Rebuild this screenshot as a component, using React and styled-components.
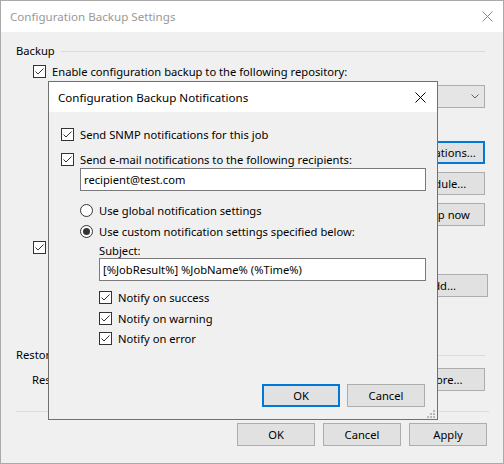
import React from 'react';
import styled, { createGlobalStyle } from 'styled-components';

const GlobalStyle = createGlobalStyle`
  html, body {
    margin: 0;
    padding: 0;
    background: #ffffff;
  }
  body {
    font-family: "Noto Sans", "Open Sans", sans-serif;
    font-size: 11.2px;
    color: #000;
  }
  * { box-sizing: border-box; }
`;

const CheckIcon = ({ checked = true }) => (
  <svg width="13" height="13" viewBox="0 0 13 13">
    <rect x="0.5" y="0.5" width="12" height="12" fill="#fff" stroke="#333" />
    {checked && (
      <polyline points="2.5,6.5 5,9 10.5,3.5" fill="none" stroke="#333" strokeWidth="1" />
    )}
  </svg>
);

const RadioIcon = ({ checked }) => (
  <svg width="13" height="13" viewBox="0 0 13 13">
    <circle cx="6.5" cy="6.5" r="6" fill="#fff" stroke="#333" />
    {checked && <circle cx="6.5" cy="6.5" r="3.5" fill="#333" />}
  </svg>
);

const CloseIcon = ({ color }) => (
  <svg width="11" height="11" viewBox="0 0 11 11">
    <path d="M0.5 0.5 L10.5 10.5 M10.5 0.5 L0.5 10.5" stroke={color} strokeWidth="1" />
  </svg>
);

const Chevron = () => (
  <svg width="8" height="5" viewBox="0 0 8 5">
    <polyline points="0.5,0.5 4,4 7.5,0.5" fill="none" stroke="#606060" />
  </svg>
);

const Grip = () => (
  <svg width="8" height="8" viewBox="0 0 8 8">
    <rect x="6" y="0" width="2" height="2" fill="#b8b8b8" />
    <rect x="3" y="3" width="2" height="2" fill="#b8b8b8" />
    <rect x="6" y="3" width="2" height="2" fill="#b8b8b8" />
    <rect x="0" y="6" width="2" height="2" fill="#b8b8b8" />
    <rect x="3" y="6" width="2" height="2" fill="#b8b8b8" />
    <rect x="6" y="6" width="2" height="2" fill="#b8b8b8" />
  </svg>
);

const Window = styled.div`
  position: relative;
  width: 504px;
  height: 464px;
  border: 1px solid #aaaaaa;
  background: #f0f0f0;
  display: flex;
  flex-direction: column;
`;

const TitleBar = styled.div`
  height: ${p => p.$height}px;
  flex-shrink: 0;
  background: #ffffff;
  display: flex;
  align-items: center;
  justify-content: space-between;
  padding: 0 ${p => p.$padRight}px 0 ${p => p.$padLeft}px;
  color: ${p => (p.$active ? '#000' : '#999')};
  font-size: 11.6px;
`;

const CloseBox = styled.div`
  display: flex;
  align-items: center;
`;

const Body = styled.div`
  flex: 1;
  display: flex;
  flex-direction: column;
  padding: 12px 18px 0 15px;
`;

const GroupHeader = styled.div`
  height: 14px;
  display: flex;
  align-items: center;
  gap: 6px;
  margin-top: ${p => p.$top || 0}px;
  line-height: 14px;

  &::after {
    content: '';
    flex: 1;
    height: 1px;
    background: #dcdcdc;
  }
`;

const OptionRow = styled.label`
  height: 15px;
  display: flex;
  align-items: center;
  gap: 6px;
  line-height: 15px;
  white-space: nowrap;
  margin-top: ${p => p.$top || 0}px;
  margin-left: ${p => p.$indent || 0}px;

  svg { flex-shrink: 0; }
`;

const Combo = styled.div`
  height: 23px;
  margin-top: ${p => p.$top}px;
  margin-left: 36px;
  border: 1px solid #adadad;
  background: #e5e5e5;
  display: flex;
  align-items: center;
  justify-content: flex-end;
  padding-right: 5px;
`;

const Button = styled.div`
  width: ${p => p.$width || 94}px;
  height: 23px;
  flex-shrink: 0;
  background: #e1e1e1;
  border: ${p => (p.$focused ? '2px solid #0078d7' : '1px solid #adadad')};
  display: flex;
  align-items: center;
  justify-content: center;
  white-space: nowrap;
  overflow: hidden;
  line-height: 15px;
`;

const ButtonStack = styled.div`
  align-self: flex-end;
  display: flex;
  flex-direction: column;
  gap: 8px;
  margin-top: ${p => p.$top}px;
  margin-right: ${p => p.$right || 0}px;
`;

const Row = styled.div`
  display: flex;
  align-items: center;
  justify-content: space-between;
  margin-top: ${p => p.$top}px;
  margin-left: ${p => p.$indent || 0}px;
`;

const Separator = styled.div`
  height: 1px;
  background: #dcdcdc;
  margin: 20px -4px 0 0;
`;

const Footer = styled.div`
  display: flex;
  justify-content: flex-end;
  gap: 8px;
  margin: 11px -2px 0 0;
`;

const Dialog = styled.div`
  position: absolute;
  left: 47px;
  top: 80px;
  width: 390px;
  height: 339px;
  border: 1px solid #707070;
  background: #f0f0f0;
  display: flex;
  flex-direction: column;
`;

const DialogBody = styled.div`
  position: relative;
  flex: 1;
  display: flex;
  flex-direction: column;
  padding: 15px 12px 12px 12px;
`;

const Field = styled.div`
  height: 23px;
  width: ${p => p.$width}px;
  margin-top: ${p => p.$top || 0}px;
  margin-left: ${p => p.$indent}px;
  background: #ffffff;
  border: 1px solid #7a7a7a;
  display: flex;
  align-items: center;
  padding-left: 3px;
  white-space: nowrap;
`;

const FieldLabel = styled.div`
  height: 13px;
  line-height: 13px;
  margin-top: ${p => p.$top}px;
  margin-left: ${p => p.$indent}px;
`;

const DialogButtons = styled.div`
  margin-top: auto;
  display: flex;
  justify-content: flex-end;
  gap: 7px;
`;

const GripCorner = styled.div`
  position: absolute;
  right: 2px;
  bottom: 1px;
  display: flex;
`;

export default function App() {
  return (
    <>
      <GlobalStyle />
      <Window>
        <TitleBar $height={31} $padLeft={9} $padRight={10}>
          <span>Configuration Backup Settings</span>
          <CloseBox><CloseIcon color="#8a8a8a" /></CloseBox>
        </TitleBar>
        <Body>
          <GroupHeader>Backup</GroupHeader>
          <OptionRow $top={6} $indent={17}>
            <CheckIcon />
            Enable configuration backup to the following repository:
          </OptionRow>
          <Combo $top={6}><Chevron /></Combo>
          <ButtonStack $top={33}>
            <Button $focused>Notifications...</Button>
            <Button>Schedule...</Button>
            <Button>Backup now</Button>
          </ButtonStack>
          <OptionRow $top={14} $indent={17}>
            <CheckIcon />
            Encrypt configuration backup
          </OptionRow>
          <ButtonStack $top={19} $right={-3}>
            <Button>Add...</Button>
          </ButtonStack>
          <GroupHeader $top={51}>Restore</GroupHeader>
          <Row $top={6} $indent={16}>
            <span>Restore configuration from backup</span>
            <Button>Restore...</Button>
          </Row>
          <Separator />
          <Footer>
            <Button $width={78}>OK</Button>
            <Button $width={78}>Cancel</Button>
            <Button $width={78}>Apply</Button>
          </Footer>
        </Body>

        <Dialog>
          <TitleBar $active $height={30} $padLeft={9} $padRight={11}>
            <span>Configuration Backup Notifications</span>
            <CloseBox><CloseIcon color="#000" /></CloseBox>
          </TitleBar>
          <DialogBody>
            <OptionRow>
              <CheckIcon />
              Send SNMP notifications for this job
            </OptionRow>
            <OptionRow $top={10}>
              <CheckIcon />
              Send e-mail notifications to the following recipients:
            </OptionRow>
            <Field $top={1} $indent={19} $width={346}>recipient@test.com</Field>
            <OptionRow $top={12} $indent={19}>
              <RadioIcon />
              Use global notification settings
            </OptionRow>
            <OptionRow $top={6} $indent={19}>
              <RadioIcon checked />
              Use custom notification settings specified below:
            </OptionRow>
            <FieldLabel $top={5} $indent={38}>Subject:</FieldLabel>
            <Field $top={1} $indent={38} $width={327}>[%JobResult%] %JobName% (%Time%)</Field>
            <OptionRow $top={9} $indent={38}>
              <CheckIcon />
              Notify on success
            </OptionRow>
            <OptionRow $top={6} $indent={38}>
              <CheckIcon />
              Notify on warning
            </OptionRow>
            <OptionRow $top={5} $indent={38}>
              <CheckIcon />
              Notify on error
            </OptionRow>
            <DialogButtons>
              <Button $width={78} $focused>OK</Button>
              <Button $width={78}>Cancel</Button>
            </DialogButtons>
            <GripCorner><Grip /></GripCorner>
          </DialogBody>
        </Dialog>
      </Window>
    </>
  );
}
